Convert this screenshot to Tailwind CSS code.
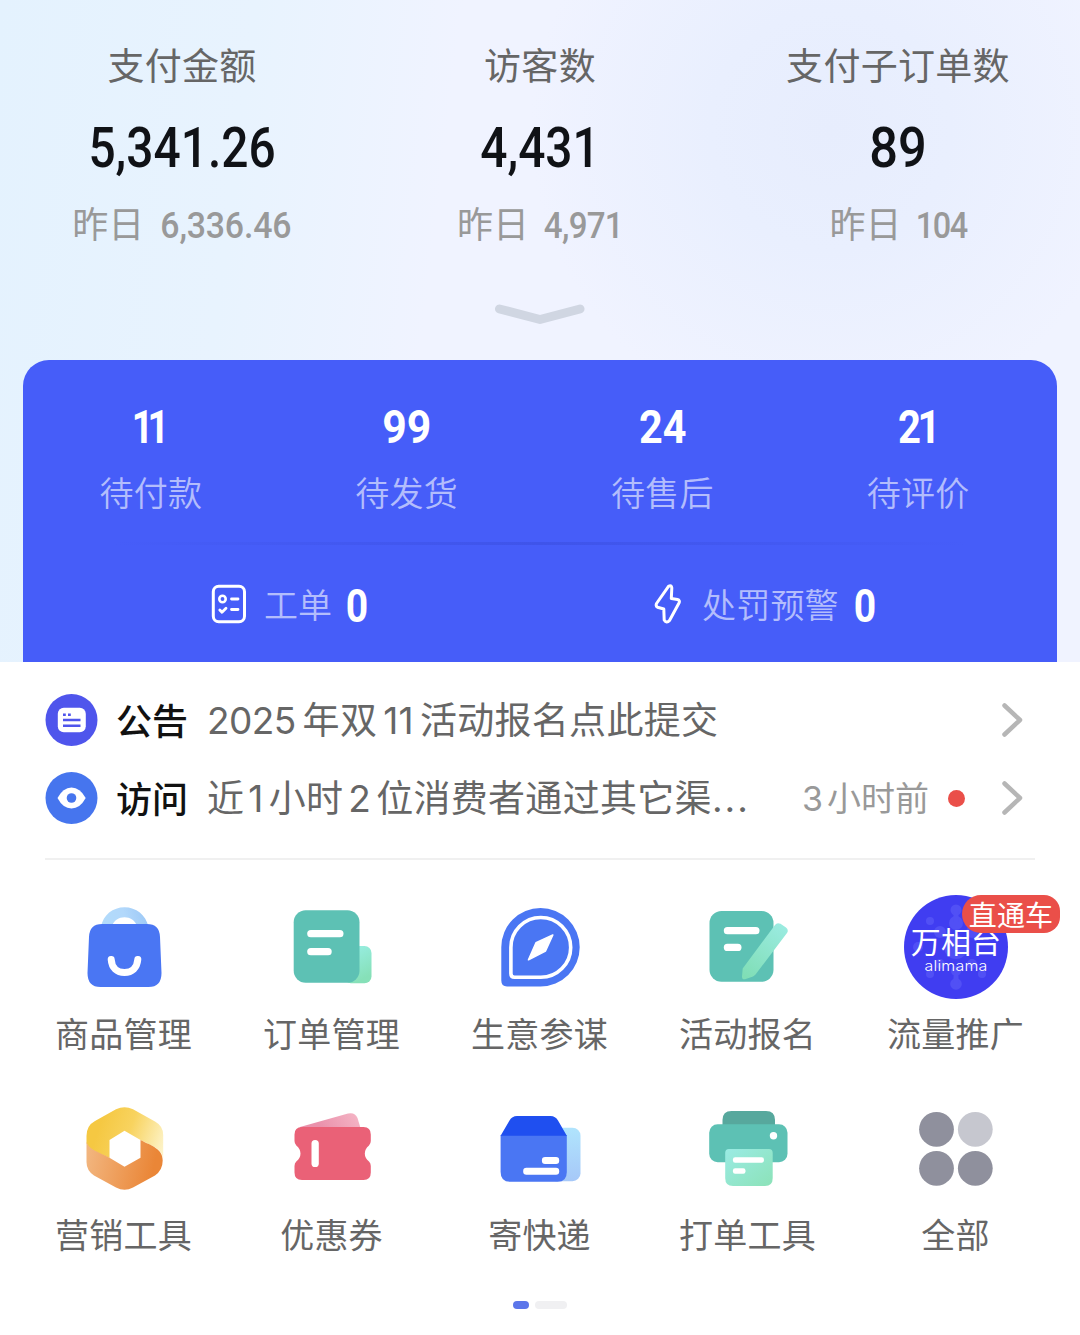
<!DOCTYPE html>
<html lang="zh-CN">
<head>
    <meta charset="UTF-8">
    <meta name="viewport" content="width=device-width, initial-scale=1.0">
    <title>店铺工作台</title>
    <script src="https://cdn.jsdelivr.net/npm/@tailwindcss/browser@4"></script>
</head>
<body class="w-[1080px] h-[1335px] overflow-hidden bg-white font-['Noto_Sans_CJK_SC',sans-serif] text-[#666]">

    <!-- Header: shop data -->
    <header class="h-[662px] flex flex-col bg-[radial-gradient(circle_at_830px_130px,#e7edfd_0,#e9effe_120px,#f0f3ff00_300px),linear-gradient(97deg,#e4f2fe_0,#e8f3fe_22%,#f0f3ff_40%,#f0f3ff_100%)]">
        <div class="grid grid-cols-3 px-[3px] pt-[39px] text-center">
            <div>
                <p class="text-[37px] leading-[50px] tracking-[0.3px]">支付金额</p>
                <p class="mt-[29px] text-[55px] leading-[60px] font-medium text-[#101216] font-[Roboto,sans-serif] scale-x-[0.87]">5,341.26</p>
                <p class="mt-[19px] h-[51px] text-[36px] leading-[50px] text-[#999]">昨日 <span class="inline-block origin-right scale-x-[0.94] font-[Roboto,sans-serif] font-medium text-[36px] tracking-[-0.2px]">6,336.46</span></p>
            </div>
            <div>
                <p class="text-[37px] leading-[50px] tracking-[0.3px]">访客数</p>
                <p class="mt-[29px] text-[55px] leading-[60px] font-medium text-[#101216] font-[Roboto,sans-serif] scale-x-[0.87]">4,431</p>
                <p class="mt-[19px] h-[51px] text-[36px] leading-[50px] text-[#999]">昨日 <span class="inline-block origin-right scale-x-[0.92] font-[Roboto,sans-serif] font-medium text-[36px] tracking-[-0.8px]">4,971</span></p>
            </div>
            <div>
                <p class="text-[37px] leading-[50px] tracking-[0.3px]">支付子订单数</p>
                <p class="mt-[29px] text-[55px] leading-[60px] font-medium text-[#101216] font-[Roboto,sans-serif] scale-x-[0.92]">89</p>
                <p class="mt-[19px] h-[51px] text-[36px] leading-[50px] text-[#999]">昨日 <span class="inline-block origin-right scale-x-[0.9] font-[Roboto,sans-serif] font-medium text-[36px] tracking-[-1.5px]">104</span></p>
            </div>
        </div>

        <svg class="mx-auto mt-[54px] w-[92px] h-[24px] shrink-0" viewBox="0 0 92 24" fill="none">
            <path d="M5.500 7L46 17.500L86 7" stroke="#d0d6e2" stroke-width="9" stroke-linecap="round" stroke-linejoin="round"/>
        </svg>

        <!-- Pending orders card -->
        <div class="mt-[34px] mx-[23px] h-[302px] shrink-0 rounded-t-[26px] bg-[#465df9]">
            <div class="grid grid-cols-4 pr-[11px] pt-[41px] text-center">
                <div>
                    <p class="text-[46px] leading-[52px] font-bold text-white tracking-[-7px] pr-[8px] scale-x-[0.82] font-[Roboto,sans-serif]">11</p>
                    <p class="mt-[15px] text-[34px] leading-[48px] text-white/60 font-[350] tracking-[0.2px]">待付款</p>
                </div>
                <div>
                    <p class="text-[46px] leading-[52px] font-bold text-white scale-x-[0.93] font-[Roboto,sans-serif]">99</p>
                    <p class="mt-[15px] text-[34px] leading-[48px] text-white/60 font-[350] tracking-[0.2px]">待发货</p>
                </div>
                <div>
                    <p class="text-[46px] leading-[52px] font-bold text-white scale-x-[0.9] font-[Roboto,sans-serif]">24</p>
                    <p class="mt-[15px] text-[34px] leading-[48px] text-white/60 font-[350] tracking-[0.2px]">待售后</p>
                </div>
                <div>
                    <p class="text-[46px] leading-[52px] font-bold text-white tracking-[-4px] pr-[1px] scale-x-[0.87] font-[Roboto,sans-serif]">21</p>
                    <p class="mt-[15px] text-[34px] leading-[48px] text-white/60 font-[350] tracking-[0.2px]">待评价</p>
                </div>
            </div>
            <div class="mx-[90px] mt-[26px] h-[3px] bg-linear-to-r from-[#465df9] via-[#3f54ea] to-[#465df9]"></div>
            <div class="flex items-center mt-[34px] h-[50px] pl-[188px]">
                <svg class="w-[36px] h-[40px] shrink-0" viewBox="0 0 36 40" fill="none" stroke="#fff" stroke-linecap="round" stroke-linejoin="round">
                    <rect x="2.300" y="2.200" width="31.200" height="35.600" rx="5.500" stroke-width="3"/>
                    <circle cx="11.500" cy="15" r="3.200" stroke-width="2.600"/>
                    <path d="M20.500 15H27M20.500 25.500H27M8.800 26L11 28.300L15 24.300" stroke-width="2.800"/>
                </svg>
                <span class="ml-[17px] text-[34px] leading-[50px] text-white/60 font-[350]">工单</span>
                <span class="ml-[12px] mt-1 w-[24px] text-center text-[46px] leading-[50px] font-bold text-white font-[Roboto,sans-serif] scale-x-[0.85]">0</span>
                <svg class="ml-[286px] w-[28px] h-[42px] shrink-0" viewBox="0 0 28 42" fill="none">
                    <path d="M14.500 3.300Q17.500 1.500 17.800 5L17.300 15.500L23.500 16.500Q26.300 17.200 25 20L15.500 37.500Q12.500 40.800 10.200 37L9.800 26L3.500 24.200Q1.500 23 2.500 20.500Z" stroke="#fff" stroke-width="3" stroke-linejoin="round"/>
                </svg>
                <span class="ml-[20px] text-[34px] leading-[50px] text-white/60 font-[350] tracking-[0.2px]">处罚预警</span>
                <span class="ml-[13px] mt-1 w-[24px] text-center text-[46px] leading-[50px] font-bold text-white font-[Roboto,sans-serif] scale-x-[0.85]">0</span>
            </div>
        </div>
    </header>

    <!-- Notices -->
    <section class="mx-[45px] pt-[32px] h-[198px] border-b-2 border-[#f0f0f0]">
        <div class="flex items-center h-[52px]">
            <svg class="w-[53px] h-[52px] shrink-0" viewBox="0 0 53 52">
                <circle cx="26.500" cy="26" r="26" fill="#4f55ec"/>
                <rect x="12.800" y="13.800" width="28" height="24.500" rx="6" fill="#fff"/>
                <path d="M18 20.800H20.800M23 20.800H25.800M18 26H35.500M18 31.700H35.500" stroke="#4f55ec" stroke-width="2.600"/>
            </svg>
            <span class="ml-[18px] -mt-[3px] text-[36px] leading-[52px] font-medium text-[#111]">公告</span>
            <span class="ml-[19px] -mt-[2px] text-[37px] leading-[52px] tracking-[0.3px] whitespace-nowrap"><span class="font-[Inter,sans-serif] tracking-[-0.6px] mr-[7px]">2025</span>年双<span class="font-[Inter,sans-serif] mx-[6px]">11</span>活动报名点此提交</span>
            <svg class="ml-auto mr-[11px] w-[24px] h-[38px]" viewBox="0 0 24 38" fill="none">
                <path d="M4.500 4.500L20 19L4.500 33.500" stroke="#b6b6b6" stroke-width="4.500" stroke-linecap="round" stroke-linejoin="round"/>
            </svg>
        </div>
        <div class="flex items-center h-[52px] mt-[26px]">
            <svg class="w-[53px] h-[52px] shrink-0" viewBox="0 0 53 52">
                <circle cx="26.500" cy="26" r="26" fill="#4675ee"/>
                <path d="M12.500 26Q18 15.500 26.500 15.500Q35 15.500 40.700 26Q35 36.500 26.500 36.500Q18 36.500 12.500 26Z" fill="#fff"/>
                <circle cx="26.500" cy="26" r="4.800" fill="#4675ee"/>
            </svg>
            <span class="ml-[18px] -mt-[3px] text-[36px] leading-[52px] font-medium text-[#111]">访问</span>
            <span class="ml-[19px] -mt-[1px] text-[37px] leading-[52px] tracking-[0.3px] whitespace-nowrap">近<span class="font-[Inter,sans-serif] ml-[4px] mr-[5px]">1</span>小时<span class="font-[Inter,sans-serif] mx-[5px]">2</span>位消费者通过其它渠<span class="font-[Inter,sans-serif] tracking-[2px]">...</span></span>
            <span class="ml-auto -mt-[1px] text-[34px] leading-[52px] whitespace-nowrap text-[#999]"><span class="font-[Inter,sans-serif] mr-[4px]">3</span>小时前</span>
            <span class="ml-[19px] w-[17px] h-[17px] shrink-0 rounded-full bg-[#ea4f49]"></span>
            <svg class="ml-[35px] mr-[11px] w-[24px] h-[38px] shrink-0" viewBox="0 0 24 38" fill="none">
                <path d="M4.500 4.500L20 19L4.500 33.500" stroke="#b6b6b6" stroke-width="4.500" stroke-linecap="round" stroke-linejoin="round"/>
            </svg>
        </div>
    </section>

    <!-- Tools -->
    <section class="grid grid-cols-5 ml-[19.5px] mr-[20.5px] pt-[35px] gap-y-[23px] text-center text-[34px] leading-[50px] tracking-[0.2px]">
        <div class="flex flex-col items-center h-[178px]">
            <svg class="w-[104px] h-[104px]" viewBox="0 0 104 104" fill="none">
                <defs>
                    <linearGradient id="handle" x1="30" y1="30" x2="76" y2="18" gradientUnits="userSpaceOnUse">
                        <stop stop-color="#b2dbfb"/><stop offset=".5" stop-color="#b2d8fb"/><stop offset="1" stop-color="#9cc8f6"/>
                    </linearGradient>
                </defs>
                <path d="M29 32C31 20 41 12.300 52.500 12.300S74 20 76.500 32H65.500C63 25 58 22.300 52.500 22.300S42 25 39.500 32Z" fill="url(#handle)"/>
                <path d="M30 29H75Q87.500 29 88 42L89.500 78Q89.500 92 76.500 92H28.500Q15.500 92 15.500 78L17 42Q17.500 29 30 29Z" fill="#4a76f3"/>
                <path d="M39.200 64.500C39.800 73 45 77.500 52.500 77.500S65 73 65.800 64.500" stroke="#fff" stroke-width="7" stroke-linecap="round"/>
            </svg>
            <p class="mt-[8.5px]">商品管理</p>
        </div>
        <div class="flex flex-col items-center h-[178px]">
            <svg class="w-[104px] h-[104px]" viewBox="0 0 104 104">
                <defs>
                    <linearGradient id="mint" x1="0" y1="0" x2=".4" y2="1">
                        <stop stop-color="#9af0e8"/><stop offset="1" stop-color="#86e0b8"/>
                    </linearGradient>
                </defs>
                <rect x="64" y="51" width="27.500" height="37.300" rx="7" fill="url(#mint)"/>
                <rect x="13.700" y="15.300" width="65.800" height="72.500" rx="12" fill="#5dc1b4"/>
                <rect x="27.200" y="35" width="36.300" height="7.300" rx="3.600" fill="#fff"/>
                <rect x="27.200" y="53" width="24.500" height="7.300" rx="3.600" fill="#fff"/>
            </svg>
            <p class="mt-[8.5px]">订单管理</p>
        </div>
        <div class="flex flex-col items-center h-[178px]">
            <svg class="w-[104px] h-[104px]" viewBox="0 0 104 104" fill="none">
                <path d="M52.500 13A39.200 39.200 0 0 1 52.500 91.400H19Q13.300 91.400 13.300 85.500V52.200A39.200 39.200 0 0 1 52.500 13Z" fill="#4a76f3"/>
                <path d="M52.800 22.500A29.900 29.900 0 0 1 52.800 82.300H26.500Q22.900 82.300 22.900 78.500V52.400A29.900 29.900 0 0 1 52.800 22.500Z" stroke="#fff" stroke-width="3.600"/>
                <path d="M64.800 40L48 47.700L40.500 64.700L57.500 56Z" fill="#fff" stroke="#fff" stroke-width="1.600" stroke-linejoin="round"/>
            </svg>
            <p class="mt-[8.5px]">生意参谋</p>
        </div>
        <div class="flex flex-col items-center h-[178px]">
            <svg class="w-[104px] h-[104px]" viewBox="0 0 104 104">
                <defs>
                    <linearGradient id="pen" x1="86" y1="30" x2="50" y2="82" gradientUnits="userSpaceOnUse">
                        <stop stop-color="#9aebe0"/><stop offset="1" stop-color="#80deb6"/>
                    </linearGradient>
                </defs>
                <rect x="13.500" y="16" width="64" height="70.700" rx="12" fill="#5dc1b4"/>
                <rect x="27.800" y="32" width="35.700" height="7.300" rx="3.600" fill="#fff"/>
                <rect x="27.800" y="48.700" width="17.700" height="7.300" rx="3.600" fill="#fff"/>
                <path d="M79 30Q81 27 84.500 28.800L90 32.500Q93 35 91 38L59.500 79.500Q58.500 80.700 57 81.500L49 84.300Q46 84.800 46 81.500L46.700 73.500Z" fill="url(#pen)"/>
            </svg>
            <p class="mt-[8.5px]">活动报名</p>
        </div>
        <div class="relative flex flex-col items-center h-[178px]">
            <svg class="w-[104px] h-[104px]" viewBox="0 0 104 104">
                <circle cx="52" cy="52" r="52" fill="#403df1"/>
                <g fill="#5150f5">
                    <circle cx="52" cy="15" r="5.500"/>
                    <circle cx="52" cy="28" r="7"/>
                    <circle cx="26" cy="26" r="4"/>
                    <circle cx="14" cy="52" r="5"/>
                    <circle cx="36" cy="37" r="6"/>
                    <circle cx="68" cy="37" r="6"/>
                    <circle cx="52" cy="52" r="12"/>
                    <circle cx="36" cy="69" r="5"/>
                    <circle cx="68" cy="69" r="5"/>
                    <circle cx="26" cy="79" r="4"/>
                    <circle cx="78" cy="79" r="4"/>
                    <circle cx="52" cy="76" r="5"/>
                    <circle cx="52" cy="89" r="5.800"/>
                    <path d="M50 76H54L55 89H49ZM50 15H54L55 28H49Z"/>
                </g>
                <text x="52" y="58" text-anchor="middle" font-size="30" fill="#fff" font-family="Noto Sans CJK SC, sans-serif">万相台</text>
                <text x="20.500" y="75.500" font-size="14.500" textLength="63" lengthAdjust="spacingAndGlyphs" fill="#fff" font-family="Inter, sans-serif" font-weight="300">alimama</text>
            </svg>
            <span class="absolute left-[110.5px] top-0 w-[98px] h-[38px] rounded-l-[19px] rounded-r-[16px] bg-[#ea4f49] text-white text-[28px] leading-[38px]">直通车</span>
            <p class="mt-[8.5px]">流量推广</p>
        </div>

        <div class="flex flex-col items-center h-[178px]">
            <svg class="w-[104px] h-[104px]" viewBox="0 0 104 104">
                <defs>
                    <linearGradient id="gold" x1="26" y1="34" x2="90" y2="56" gradientUnits="userSpaceOnUse">
                        <stop stop-color="#f5c842"/><stop offset=".45" stop-color="#f8d35f"/><stop offset="1" stop-color="#fdf3c8"/>
                    </linearGradient>
                    <linearGradient id="orange" x1="16" y1="56" x2="82" y2="70" gradientUnits="userSpaceOnUse">
                        <stop stop-color="#f2b57e"/><stop offset="1" stop-color="#ea8637"/>
                    </linearGradient>
                </defs>
                <path d="M14.500 47V40Q14.500 29.500 23 25L44 13.300Q52.500 9 61 13.300L83 25.500Q91.200 30 91.200 39V62C89 52 80 50 68.500 44L52.500 34.700L37.500 44V62C27 57 16 54 14.500 47Z" fill="url(#gold)"/>
                <path d="M14.500 46C17 54 27 56 37.500 61.700L52.500 70.700L68.500 61.700V44C80 50 90.700 53 90.700 64.500Q90.700 74 83 79.500L61 91.500Q52.500 96 44 91.500L22 79.500Q14.500 74.500 14.500 66Z" fill="url(#orange)"/>
            </svg>
            <p class="mt-[8.5px]">营销工具</p>
        </div>
        <div class="flex flex-col items-center h-[178px]">
            <svg class="w-[104px] h-[104px]" viewBox="0 0 104 104">
                <defs>
                    <linearGradient id="pink" x1="76" y1="18" x2="45" y2="38" gradientUnits="userSpaceOnUse">
                        <stop stop-color="#f4b3c4"/><stop offset="1" stop-color="#ea91ab"/>
                    </linearGradient>
                </defs>
                <path d="M20 31L68 17.600Q75 16 77.500 22L80.500 32H20Z" fill="url(#pink)"/>
                <path d="M22 31H83.500Q90.800 31 90.800 38.500V45Q90.800 47.500 89 49.500Q84.800 53 84.800 57.500T89 65.500Q90.800 67 90.800 70V76.500Q90.800 84 83.500 84H22Q14.500 84 14.500 76.500V70Q14.500 67 16.300 65.500Q20.500 62 20.500 57.500T16.300 49.500Q14.500 47.500 14.500 45V38.500Q14.500 31 22 31Z" fill="#ea6177"/>
                <rect x="31.500" y="44" width="7.300" height="27" rx="3.600" fill="#fff"/>
            </svg>
            <p class="mt-[8.5px]">优惠券</p>
        </div>
        <div class="flex flex-col items-center h-[178px]">
            <svg class="w-[104px] h-[104px]" viewBox="0 0 104 104">
                <defs>
                    <linearGradient id="sky" x1="0" y1="0" x2="0" y2="1">
                        <stop stop-color="#b0e4fd"/><stop offset="1" stop-color="#a6c8f8"/>
                    </linearGradient>
                </defs>
                <rect x="60" y="31.700" width="32.500" height="53.500" rx="8" fill="url(#sky)"/>
                <path d="M12.600 39H78.800V76Q78.800 85.800 69.500 85.800H22Q12.600 85.800 12.600 76Z" fill="#4a76f3"/>
                <path d="M12.600 39.700L21.500 24.500Q24 20 29 20H62.500Q67.500 20 70 24.500L78.800 39.700Z" fill="#1f4ff0"/>
                <rect x="53.900" y="61" width="17.300" height="7" rx="3.200" fill="#fff"/>
                <rect x="35.200" y="71.700" width="36" height="7" rx="3.200" fill="#fff"/>
            </svg>
            <p class="mt-[8.5px]">寄快递</p>
        </div>
        <div class="flex flex-col items-center h-[178px]">
            <svg class="w-[104px] h-[104px]" viewBox="0 0 104 104">
                <defs>
                    <linearGradient id="paper" x1="0" y1="0" x2="1" y2="1">
                        <stop stop-color="#9aebe4"/><stop offset="1" stop-color="#8ce2b8"/>
                    </linearGradient>
                </defs>
                <path d="M26.500 30V24Q26.500 15 35.500 15H70Q79 15 79 24V30Z" fill="#57a89d"/>
                <rect x="13.200" y="28.300" width="78.300" height="38" rx="8.500" fill="#5dc1b4"/>
                <circle cx="77.500" cy="39.700" r="3.700" fill="#fff"/>
                <path d="M33 53H73Q76.700 53 76.700 57V82Q76.700 90 69 90H37Q29.200 90 29.200 82V57Q29.200 53 33 53Z" fill="url(#paper)"/>
                <rect x="36.900" y="61.300" width="31" height="5.400" rx="2.200" fill="#fff"/>
                <rect x="36.900" y="72.300" width="12.600" height="5.400" rx="2.200" fill="#fff"/>
            </svg>
            <p class="mt-[8.5px]">打单工具</p>
        </div>
        <div class="flex flex-col items-center h-[178px]">
            <svg class="w-[104px] h-[104px]" viewBox="0 0 104 104" fill="#8f909d">
                <circle cx="32.500" cy="33.300" r="17.400"/>
                <circle cx="71.300" cy="33.300" r="17.400" fill="#c6c7cf"/>
                <circle cx="32.500" cy="72.300" r="17.400"/>
                <circle cx="71.300" cy="72.300" r="17.400"/>
            </svg>
            <p class="mt-[8.5px]">全部</p>
        </div>
    </section>

    <!-- Pager -->
    <div class="flex justify-center gap-[6px] mt-[27px]">
        <span class="w-[16px] h-[8px] rounded-[4px] bg-[#5c76ea]"></span>
        <span class="w-[32px] h-[8px] rounded-[4px] bg-[#f0f0f2]"></span>
    </div>

</body>
</html>
